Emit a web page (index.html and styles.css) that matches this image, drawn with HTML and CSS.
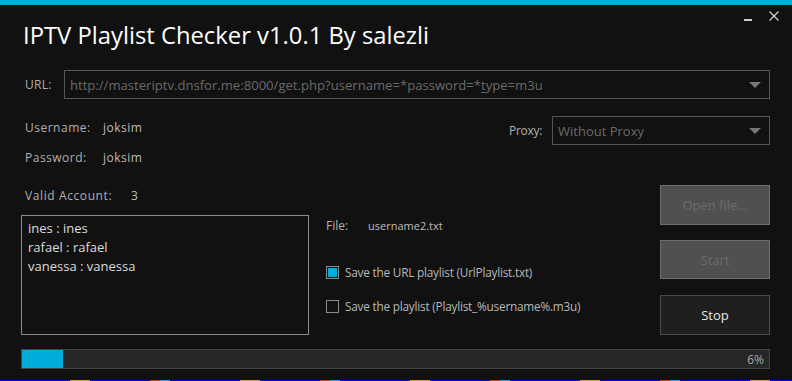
FILE: index.html
```html
<!DOCTYPE html>
<html>
<head>
<meta charset="utf-8">
<link rel="stylesheet" href="styles.css">
</head>
<body>
<div class="window">
  <div class="accent"></div>
  <div class="titlebar">
    <div class="title">IPTV Playlist Checker v1.0.1 By salezli</div>
    <div class="controls">
      <span class="min"></span>
      <svg class="close" width="10" height="10" viewBox="0 0 10 10"><path d="M0.5 0.5 L9.5 9.5 M9.5 0.5 L0.5 9.5" stroke="#cfcfcf" stroke-width="1.3" fill="none"/></svg>
    </div>
  </div>
  <div class="content">
    <div class="row-url">
      <div class="lbl url-lbl">URL:</div>
      <div class="combo url-combo">
        <span class="combo-text url-text">http://masteriptv.dnsfor.me:8000/get.php?username=*password=*<u>t</u>ype=m3u</span>
        <span class="arrow"></span>
      </div>
    </div>
    <div class="row-cred">
      <div class="creds">
        <div class="cred"><span class="lbl key">Username:</span><span class="val spaced">joksim</span></div>
        <div class="cred"><span class="lbl key">Password:</span><span class="val spaced">joksim</span></div>
      </div>
      <div class="proxy">
        <span class="lbl">Proxy:</span>
        <div class="combo proxy-combo">
          <span class="combo-text">Without Proxy</span>
          <span class="arrow"></span>
        </div>
      </div>
    </div>
    <div class="main">
      <div class="leftcol">
        <div class="valid"><span class="lbl key2">Valid Account:</span><span class="val">3</span></div>
        <div class="listbox">
          <div class="item">ines : ines</div>
          <div class="item">rafael : rafael</div>
          <div class="item">vanessa : vanessa</div>
        </div>
      </div>
      <div class="midcol">
        <div class="file"><span class="lbl fkey">File:</span><span class="val">username2.txt</span></div>
        <label class="check"><span class="box checked"></span><span class="ctext">Save the URL playlist (UrlPlaylist.txt)</span></label>
        <label class="check"><span class="box"></span><span class="ctext">Save the playlist (Playlist_%username%.m3u)</span></label>
      </div>
      <div class="btncol">
        <div class="btn disabled">Open file...</div>
        <div class="btn disabled">Start</div>
        <div class="btn active">Stop</div>
      </div>
    </div>
    <div class="progress">
      <div class="fill" style="width:41px"></div>
      <span class="pct">6%</span>
    </div>
  </div>
  <div class="taskstrip"></div>
</div>
</body>
</html>
```
FILE: styles.css
```css
* { box-sizing: border-box; }
html, body { margin: 0; padding: 0; background: #111111; }
body {
  width: 792px; height: 381px; overflow: hidden;
  font-family: "Open Sans", "Noto Sans", sans-serif;
  font-size: 12px; color: #b4b4b4;
}
.window { width: 792px; height: 381px; display: flex; flex-direction: column; }
.accent { height: 5px; background: #00acd9; flex: none; }
.titlebar { height: 60px; display: flex; justify-content: space-between; padding-left: 23px; flex: none; }
.title { color: #ffffff; font-size: 23.8px; line-height: 28px; margin-top: 16px; }
.controls { display: flex; align-items: flex-start; gap: 17px; padding-right: 13px; padding-top: 6px; }
.min { width: 8px; height: 2px; background: #cfcfcf; margin-top: 8px; }
.close { display: block; }
.content { padding: 0 22px 0 21px; flex: 1; display: flex; flex-direction: column; }
.lbl { color: #b0b0b0; }
.val { color: #bdbdbd; }
.spaced { letter-spacing: 0.5px; }
.row-url { display: flex; align-items: center; height: 29px; margin-top: 5px; }
.url-lbl { width: 43px; padding-left: 4px; letter-spacing: 0.3px; }
.combo { border: 1px solid #555555; height: 29px; display: flex; align-items: center; justify-content: space-between; padding: 0 8px 0 5px; }
.url-combo { flex: 1; }
.combo-text { color: #6a6a6a; font-size: 13px; }
.url-text { font-size: 13.1px; }
.combo-text u { text-decoration-thickness: 1px; text-underline-offset: 2px; }
.arrow { width: 0; height: 0; border-left: 6px solid transparent; border-right: 6px solid transparent; border-top: 6px solid #777777; }
.row-cred { display: flex; justify-content: space-between; margin-top: 17px; }
.creds { display: flex; flex-direction: column; gap: 12px; padding-left: 4px; padding-top: 2px; }
.cred { display: flex; height: 18px; align-items: center; }
.key { width: 78px; letter-spacing: 0.5px; }
.proxy { display: flex; align-items: center; gap: 10px; height: 29px; }
.proxy .lbl { letter-spacing: -0.3px; }
.proxy-combo { width: 218px; }
.main { display: flex; margin-top: 19px; height: 150px; }
.leftcol { width: 288px; display: flex; flex-direction: column; }
.valid { padding-left: 4px; height: 20px; display: flex; align-items: center; }
.key2 { width: 106px; letter-spacing: 0.6px; }
.listbox { margin-top: 10px; height: 120px; border: 1px solid #8a8a8a; padding: 3px 6px; }
.item { color: #dddddd; font-size: 13px; line-height: 19px; }
.midcol { flex: 1; padding-left: 17px; padding-top: 31px; display: flex; flex-direction: column; }
.file { display: flex; height: 18px; align-items: center; }
.fkey { width: 42px; }
.file .val { font-size: 11px; }
.check { display: flex; align-items: center; height: 16px; gap: 6px; }
.file + .check { margin-top: 30px; }
.check + .check { margin-top: 18px; }
.box { width: 13px; height: 13px; border: 1px solid #8a8a8a; flex: none; }
.box.checked { background: #00acd9; box-shadow: inset 0 0 0 1px #111111; }
.ctext { color: #b8b8b8; font-size: 11.8px; letter-spacing: -0.22px; }
.btncol { width: 110px; display: flex; flex-direction: column; gap: 15px; }
.btn { height: 40px; display: flex; align-items: center; justify-content: center; font-size: 13px; }
.btn.disabled { background: #505050; border: 1px solid #6e6e6e; color: #6c6c6c; }
.btn + .btn.active { margin-top: 1px; }
.btn.active { background: #1f1f1f; border: 1px solid #4a4a4a; color: #e6e6e6; }
.progress { margin-top: 14px; height: 20px; border: 1px solid #444444; background: #262626; position: relative; display: flex; align-items: center; justify-content: flex-end; padding-right: 5px; }
.fill { position: absolute; left: 0; top: 0; bottom: 0; background: #00acd9; }
.pct { position: relative; color: #a8a8a8; font-size: 12px; }
.taskstrip { height: 1px; margin-top: auto; background: repeating-linear-gradient(90deg, #0a0acc 0 70px, #d0a050 70px 90px, #0a0acc 90px 150px, #c04020 150px 160px, #30a0d0 160px 170px); }
```
